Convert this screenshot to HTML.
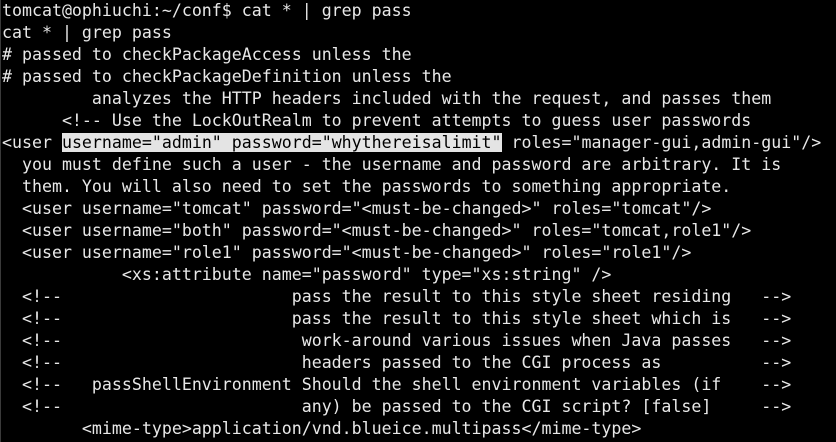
<!DOCTYPE html>
<html><head><meta charset="utf-8"><style>
html,body{margin:0;padding:0;background:#000;width:836px;height:442px;overflow:hidden}
pre{margin:0;position:absolute;left:2px;top:0;font-family:"DejaVu Sans Mono","Liberation Mono",monospace;font-size:16.6px;line-height:22px;color:#e8e8e8;white-space:pre}
.h{background:#e4e4e4;color:#000}
.edge{position:absolute;left:0;top:0;width:1px;height:442px;background:#3a3a3a}
</style></head><body>
<div class="edge"></div>
<pre>tomcat@ophiuchi:~/conf$ cat * | grep pass
cat * | grep pass
# passed to checkPackageAccess unless the
# passed to checkPackageDefinition unless the
         analyzes the HTTP headers included with the request, and passes them
      &lt;!-- Use the LockOutRealm to prevent attempts to guess user passwords
&lt;user <span class="h">username="admin" password="whythereisalimit"</span> roles="manager-gui,admin-gui"/&gt;
  you must define such a user - the username and password are arbitrary. It is
  them. You will also need to set the passwords to something appropriate.
  &lt;user username="tomcat" password="&lt;must-be-changed&gt;" roles="tomcat"/&gt;
  &lt;user username="both" password="&lt;must-be-changed&gt;" roles="tomcat,role1"/&gt;
  &lt;user username="role1" password="&lt;must-be-changed&gt;" roles="role1"/&gt;
            &lt;xs:attribute name="password" type="xs:string" /&gt;
  &lt;!--                       pass the result to this style sheet residing   --&gt;
  &lt;!--                       pass the result to this style sheet which is   --&gt;
  &lt;!--                        work-around various issues when Java passes   --&gt;
  &lt;!--                        headers passed to the CGI process as          --&gt;
  &lt;!--   passShellEnvironment Should the shell environment variables (if    --&gt;
  &lt;!--                        any) be passed to the CGI script? [false]     --&gt;
        &lt;mime-type&gt;application/vnd.blueice.multipass&lt;/mime-type&gt;</pre>
</body></html>
